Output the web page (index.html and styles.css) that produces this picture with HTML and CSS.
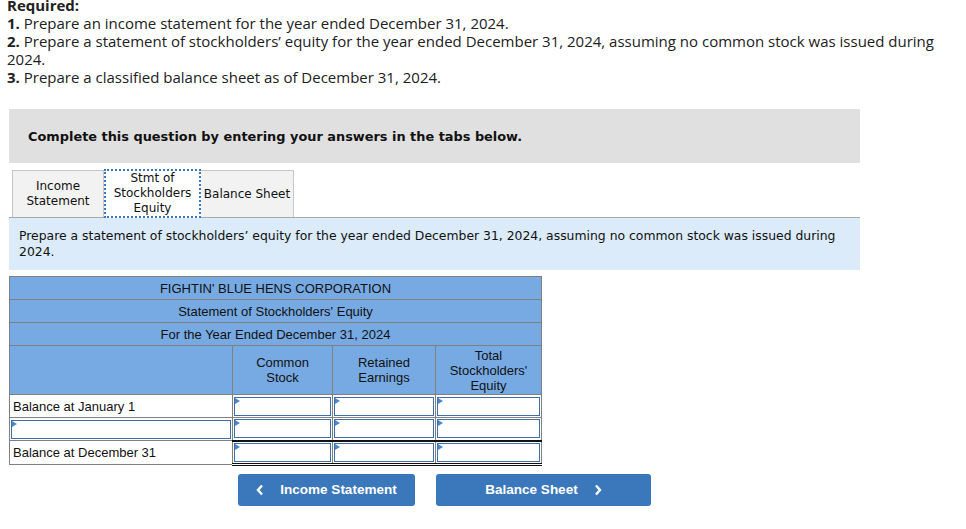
FILE: index.html
```html
<!DOCTYPE html>
<html lang="en">
<head>
  <meta charset="UTF-8" />
  <title>Statement of Stockholders' Equity</title>
  <link rel="stylesheet" href="styles.css">
</head>
<body>
  <div class="page">
    <div class="required">
      <p class="req-title">Required:</p>
      <p><b>1.</b> Prepare an income statement for the year ended December 31, 2024.</p>
      <p><b>2.</b> Prepare a statement of stockholders’ equity for the year ended December 31, 2024, assuming no common stock was issued during 2024.</p>
      <p><b>3.</b> Prepare a classified balance sheet as of December 31, 2024.</p>
    </div>

    <div class="prompt">Complete this question by entering your answers in the tabs below.</div>

    <div class="tabs">
      <div class="tab">Income<br>Statement</div>
      <div class="tab active">Stmt of<br>Stockholders<br>Equity</div>
      <div class="tab">Balance Sheet</div>
    </div>

    <div class="panel">
      Prepare a statement of stockholders’ equity for the year ended December 31, 2024, assuming no common stock was issued during 2024.
    </div>

    <table class="sheet">
      <tr class="title"><th colspan="4">FIGHTIN' BLUE HENS CORPORATION</th></tr>
      <tr class="title"><th colspan="4">Statement of Stockholders' Equity</th></tr>
      <tr class="title"><th colspan="4">For the Year Ended December 31, 2024</th></tr>
      <tr class="cols">
        <th class="label-col"></th>
        <th class="num-col">Common<br>Stock</th>
        <th class="num-col re-col">Retained<br>Earnings</th>
        <th class="num-col tot-col">Total<br>Stockholders'<br>Equity</th>
      </tr>
      <tr>
        <td class="label">Balance at January 1</td>
        <td class="cell"><div class="entry"></div></td>
        <td class="cell"><div class="entry"></div></td>
        <td class="cell"><div class="entry"></div></td>
      </tr>
      <tr>
        <td class="cell"><div class="entry"></div></td>
        <td class="cell"><div class="entry"></div></td>
        <td class="cell"><div class="entry"></div></td>
        <td class="cell"><div class="entry"></div></td>
      </tr>
      <tr class="total">
        <td class="label">Balance at December 31</td>
        <td class="cell"><div class="entry"></div></td>
        <td class="cell"><div class="entry"></div></td>
        <td class="cell"><div class="entry"></div></td>
      </tr>
    </table>

    <div class="nav">
      <button class="nav-btn prev">
        <svg class="chev" width="8" height="12" viewBox="0 0 8 12"><polyline points="6,1.5 2,6 6,10.5" /></svg>
        Income Statement
      </button>
      <button class="nav-btn next">
        Balance Sheet
        <svg class="chev" width="8" height="12" viewBox="0 0 8 12"><polyline points="2,1.5 6,6 2,10.5" /></svg>
      </button>
    </div>
  </div>
</body>
</html>
```

FILE: styles.css
```css
* {
  box-sizing: border-box;
}

body {
  margin: 0;
  background: #fff;
  color: #222;
}

.page {
  padding: 0 9px;
  width: 966px;
}

/* question text */
.required {
  margin: -4px 0 0 -2px;
  font-family: "Open Sans", sans-serif;
  font-size: 15px;
  line-height: 18px;
  color: #212121;
  width: 935px;
}

.required p {
  margin: 0;
}

.required b,
.req-title {
  font-weight: 700;
}

/* grey instruction box */
.prompt {
  margin-top: 23px;
  width: 851px;
  height: 54px;
  background: #e0e0e0;
  padding: 0 19px;
  display: flex;
  align-items: center;
  font-family: "DejaVu Sans", Verdana, sans-serif;
  font-size: 12.9px;
  font-weight: 700;
  color: #111;
}

/* tabs */
.tabs {
  display: flex;
  align-items: flex-end;
  margin-top: 6px;
  padding-left: 3px;
  width: 851px;
  border-bottom: 1px solid #a9a9a9;
}

.tab {
  height: 47px;
  display: flex;
  align-items: center;
  justify-content: center;
  text-align: center;
  font-family: "DejaVu Sans", Verdana, sans-serif;
  font-size: 12px;
  line-height: 15px;
  color: #111;
  background: #f2f2f2;
  border: 1px solid #c6c6c6;
  border-bottom: none;
}

.tab:nth-child(1) {
  width: 92px;
}

.tab.active {
  width: 97px;
  background: #fff;
  border: 2px dotted #3a78c0;
  margin-bottom: -1px;
  height: 49px;
}

.tab:nth-child(3) {
  width: 93px;
  border-left: none;
}

/* blue instruction panel */
.panel {
  width: 851px;
  background: #dbebf9;
  padding: 10px 10px 8px;
  font-family: "DejaVu Sans", Verdana, sans-serif;
  font-size: 12.4px;
  line-height: 16px;
  color: #111;
  height: 52px;
}

/* statement table */
.sheet {
  margin-top: 6px;
  border-collapse: collapse;
  font-family: "Liberation Sans", Arial, sans-serif;
  font-size: 13px;
  color: #111;
}

.sheet th,
.sheet td {
  border: 1px solid #808080;
  padding: 0;
}

.sheet th {
  background: #77aae3;
  font-weight: 400;
}

.title th {
  height: 23px;
  text-align: center;
}

.cols th {
  height: 49px;
  line-height: 15px;
  text-align: center;
}

.label-col {
  width: 223px;
}

.num-col {
  width: 100px;
}

.re-col {
  width: 103px;
}

.tot-col {
  width: 106px;
}

.sheet td {
  height: 23px;
  background: #fff;
}

.sheet td.label {
  padding-left: 3px;
}

.sheet td.cell {
  padding: 1px;
}

.entry {
  position: relative;
  height: 19px;
  border: 1px solid #3c6eae;
}

.entry::before {
  content: "";
  position: absolute;
  left: 0;
  top: 0;
  border-top: 3px solid transparent;
  border-bottom: 3px solid transparent;
  border-left: 5px solid #4a86c9;
}

.total td.cell {
  border-top: 2px solid #111;
  border-bottom: 3px double #111;
}

/* prev / next */
.nav {
  display: flex;
  gap: 21px;
  margin: 8px 0 0 229px;
}

.nav-btn {
  height: 32px;
  border: none;
  border-radius: 3px;
  background: #3a77bb;
  color: #fff;
  font-family: "Liberation Sans", Arial, sans-serif;
  font-size: 13.5px;
  font-weight: 700;
  display: flex;
  align-items: center;
  justify-content: center;
  gap: 16px;
  cursor: pointer;
}

.nav-btn.prev {
  width: 177px;
}

.nav-btn.next {
  width: 215px;
}

.chev polyline {
  fill: none;
  stroke: #fff;
  stroke-width: 2.4;
}
```
